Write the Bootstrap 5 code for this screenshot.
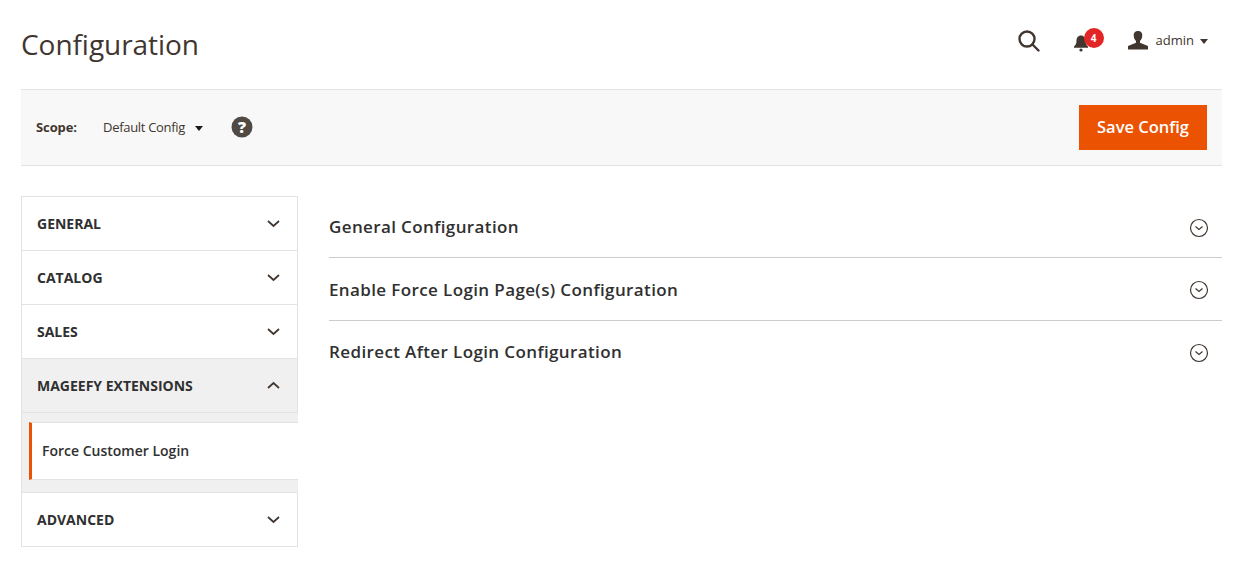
<!DOCTYPE html>
<html lang="en">
<head>
  <meta charset="UTF-8" />
  <title>Configuration</title>
  <link href="https://cdn.jsdelivr.net/npm/bootstrap@5.3.0/dist/css/bootstrap.min.css" rel="stylesheet"/>
  <style>
    body {
      font-family: "Open Sans", "Liberation Sans", sans-serif;
      color: #303030;
      background: #fff;
      padding: 0 18px 0 21px;
      font-size: 14px;
    }
    .top-head { height: 89px; padding-top: 25px; }
    .page-name { font-size: 28px; font-weight: 400; line-height: 38px; color: #41362f; margin: 0; letter-spacing: -.05px; }
    .head-tools { margin-right: 14px; margin-top: 5px; }
    .bell-box { position: relative; width: 16px; height: 20px; margin-left: 33px; }
    .bell-count {
      position: absolute; left: 11px; top: -3px; width: 20px; height: 20px; border-radius: 50%;
      background: #e22626; color: #fff; font-size: 10px; font-weight: 700; line-height: 20px; text-align: center;
    }
    .user-box { margin-left: 39px; font-size: 13px; color: #41362f; }
    .caret-down { width: 0; height: 0; border-left: 4.5px solid transparent; border-right: 4.5px solid transparent; border-top: 5px solid #41362f; }
    .user-box .caret-down { margin-left: 6px; }
    .scope-bar {
      height: 77px; background: #f8f8f8; border-top: 1px solid #e3e3e3; border-bottom: 1px solid #e3e3e3;
      padding: 0 15px;
    }
    .scope-label { font-size: 13px; font-weight: 700; color: #41362f; width: 67px; letter-spacing: -.1px; }
    .scope-value { font-size: 13px; color: #41362f; letter-spacing: -.3px; }
    .scope-value .caret-down { margin: 2px 0 0 10px; border-top-color: #1a1a1a; }
    .help-dot { margin-left: 28px; margin-bottom: 2px; }
    .save-btn {
      width: 128px; height: 45px; background: #eb5202; color: #fff; border: 0; border-radius: 0;
      font-size: 16.5px; font-weight: 600; padding: 0;
    }
    .save-btn:hover { background: #eb5202; color: #fff; }
    .main-area { margin-top: 30px; }
    .side-menu { width: 277px; flex: none; border: 1px solid #e3e3e3; }
    .side-row {
      height: 53px; padding: 0 15px; font-size: 14px; font-weight: 700; color: #303030;
      text-transform: uppercase;
    }
    .side-row + .side-row, .side-sub + .side-row { border-top: 1px solid #e3e3e3; height: 54px; }
    .side-row.is-open { background: #f0f0f0; border-bottom: 1px solid #e3e3e3; height: 55px; }
    .side-row.is-open .chev { margin-bottom: 2px; }
    .side-sub { background: #f0f0f0; padding: 9px 0 12px 7px; margin-right: -1px; }
    .side-link {
      height: 58px; background: #fff; border-top: 1px solid #e3e3e3; border-bottom: 1px solid #e3e3e3;
      border-left: 3px solid #eb5202; padding: 0 0 2px 10px; font-size: 14px; font-weight: 600; color: #303030;
    }
    .chev { margin-right: 2px; }
    .cfg-list { margin-left: 31px; }
    .cfg-row {
      height: 63px; font-size: 17px; font-weight: 600; color: #303030; letter-spacing: .38px;
      border-bottom: 1px solid #cccccc; padding: 0 13px 0 0;
    }
    .cfg-row svg { margin-top: 2px; }
    .cfg-row:first-child { height: 62px; }
    .cfg-row:nth-child(2) { padding-top: 2px; }
    .cfg-row:nth-child(2) svg { margin-top: 0; }
    .cfg-row:last-child { border-bottom: 0; padding-bottom: 2px; }
  </style>
</head>
<body>
  <header class="top-head d-flex justify-content-between align-items-start">
    <h1 class="page-name">Configuration</h1>
    <div class="head-tools d-flex align-items-center">
      <svg width="22" height="22" viewBox="0 0 22 22" fill="none" stroke="#41362f" stroke-width="2.4">
        <circle cx="9" cy="9" r="7.500"/><path d="M14.500 14.500l6 6" stroke-linecap="round"/>
      </svg>
      <div class="bell-box">
        <svg width="16" height="20" viewBox="0 0 16 20" fill="#41362f">
          <path d="M8 2.500c-3 0-4.500 2.300-4.500 5.200 0 3-1 4.600-2.500 5.800v1.300h14v-1.300c-1.500-1.200-2.500-2.800-2.500-5.800C12.500 4.800 11 2.500 8 2.500z"/>
          <circle cx="8" cy="17" r="1.600"/>
        </svg>
        <span class="bell-count">4</span>
      </div>
      <div class="user-box d-flex align-items-center">
        <svg width="20" height="20" viewBox="0 0 20 20" fill="#41362f" class="me-2">
          <path d="M10 0c-3.200 0-4.600 2.200-4.200 5.200.2 2.100 1 3.700 2.200 4.700v1.900L0 15v3.500h20V15l-8-3.200V9.900c1.200-1 2-2.600 2.200-4.700C14.600 2.200 13.200 0 10 0z"/>
        </svg>
        <span>admin</span>
        <span class="caret-down"></span>
      </div>
    </div>
  </header>

  <section class="scope-bar d-flex align-items-center justify-content-between">
    <div class="d-flex align-items-center">
      <span class="scope-label">Scope:</span>
      <span class="scope-value d-flex align-items-center">Default Config <span class="caret-down"></span></span>
      <svg class="help-dot" width="22" height="22" viewBox="0 0 22 22">
        <circle cx="11" cy="11" r="10.500" fill="#514943"/>
        <text x="11" y="16.500" text-anchor="middle" font-family="Open Sans" font-size="16" font-weight="800" fill="#fff">?</text>
      </svg>
    </div>
    <button type="button" class="btn save-btn">Save Config</button>
  </section>

  <div class="main-area d-flex align-items-start">
    <nav class="side-menu">
      <div class="side-row d-flex align-items-center justify-content-between">General
        <svg class="chev" width="13" height="8" viewBox="0 0 13 8" fill="none" stroke="#41362f" stroke-width="1.700"><path d="M1 1l5.500 5L12 1"/></svg></div>
      <div class="side-row d-flex align-items-center justify-content-between">Catalog
        <svg class="chev" width="13" height="8" viewBox="0 0 13 8" fill="none" stroke="#41362f" stroke-width="1.700"><path d="M1 1l5.500 5L12 1"/></svg></div>
      <div class="side-row d-flex align-items-center justify-content-between">Sales
        <svg class="chev" width="13" height="8" viewBox="0 0 13 8" fill="none" stroke="#41362f" stroke-width="1.700"><path d="M1 1l5.500 5L12 1"/></svg></div>
      <div class="side-row is-open d-flex align-items-center justify-content-between">Mageefy Extensions
        <svg class="chev" width="13" height="8" viewBox="0 0 13 8" fill="none" stroke="#41362f" stroke-width="1.700"><path d="M1 7l5.500-5L12 7"/></svg></div>
      <div class="side-sub">
        <div class="side-link d-flex align-items-center">Force Customer Login</div>
      </div>
      <div class="side-row d-flex align-items-center justify-content-between">Advanced
        <svg class="chev" width="13" height="8" viewBox="0 0 13 8" fill="none" stroke="#41362f" stroke-width="1.700"><path d="M1 1l5.500 5L12 1"/></svg></div>
    </nav>

    <div class="cfg-list flex-grow-1">
      <div class="cfg-row d-flex align-items-center justify-content-between">General Configuration
        <svg width="20" height="20" viewBox="0 0 20 20" fill="none" stroke="#41362f"><circle cx="10" cy="10" r="8.500" stroke-width="1.200"/><path d="M6.500 8.500L10 11.500l3.500-3" stroke-width="1.200"/></svg></div>
      <div class="cfg-row d-flex align-items-center justify-content-between">Enable Force Login Page(s) Configuration
        <svg width="20" height="20" viewBox="0 0 20 20" fill="none" stroke="#41362f"><circle cx="10" cy="10" r="8.500" stroke-width="1.200"/><path d="M6.500 8.500L10 11.500l3.500-3" stroke-width="1.200"/></svg></div>
      <div class="cfg-row d-flex align-items-center justify-content-between">Redirect After Login Configuration
        <svg width="20" height="20" viewBox="0 0 20 20" fill="none" stroke="#41362f"><circle cx="10" cy="10" r="8.500" stroke-width="1.200"/><path d="M6.500 8.500L10 11.500l3.500-3" stroke-width="1.200"/></svg></div>
    </div>
  </div>
  <script src="https://cdn.jsdelivr.net/npm/bootstrap@5.3.0/dist/js/bootstrap.bundle.min.js"></script>
</body>
</html>
